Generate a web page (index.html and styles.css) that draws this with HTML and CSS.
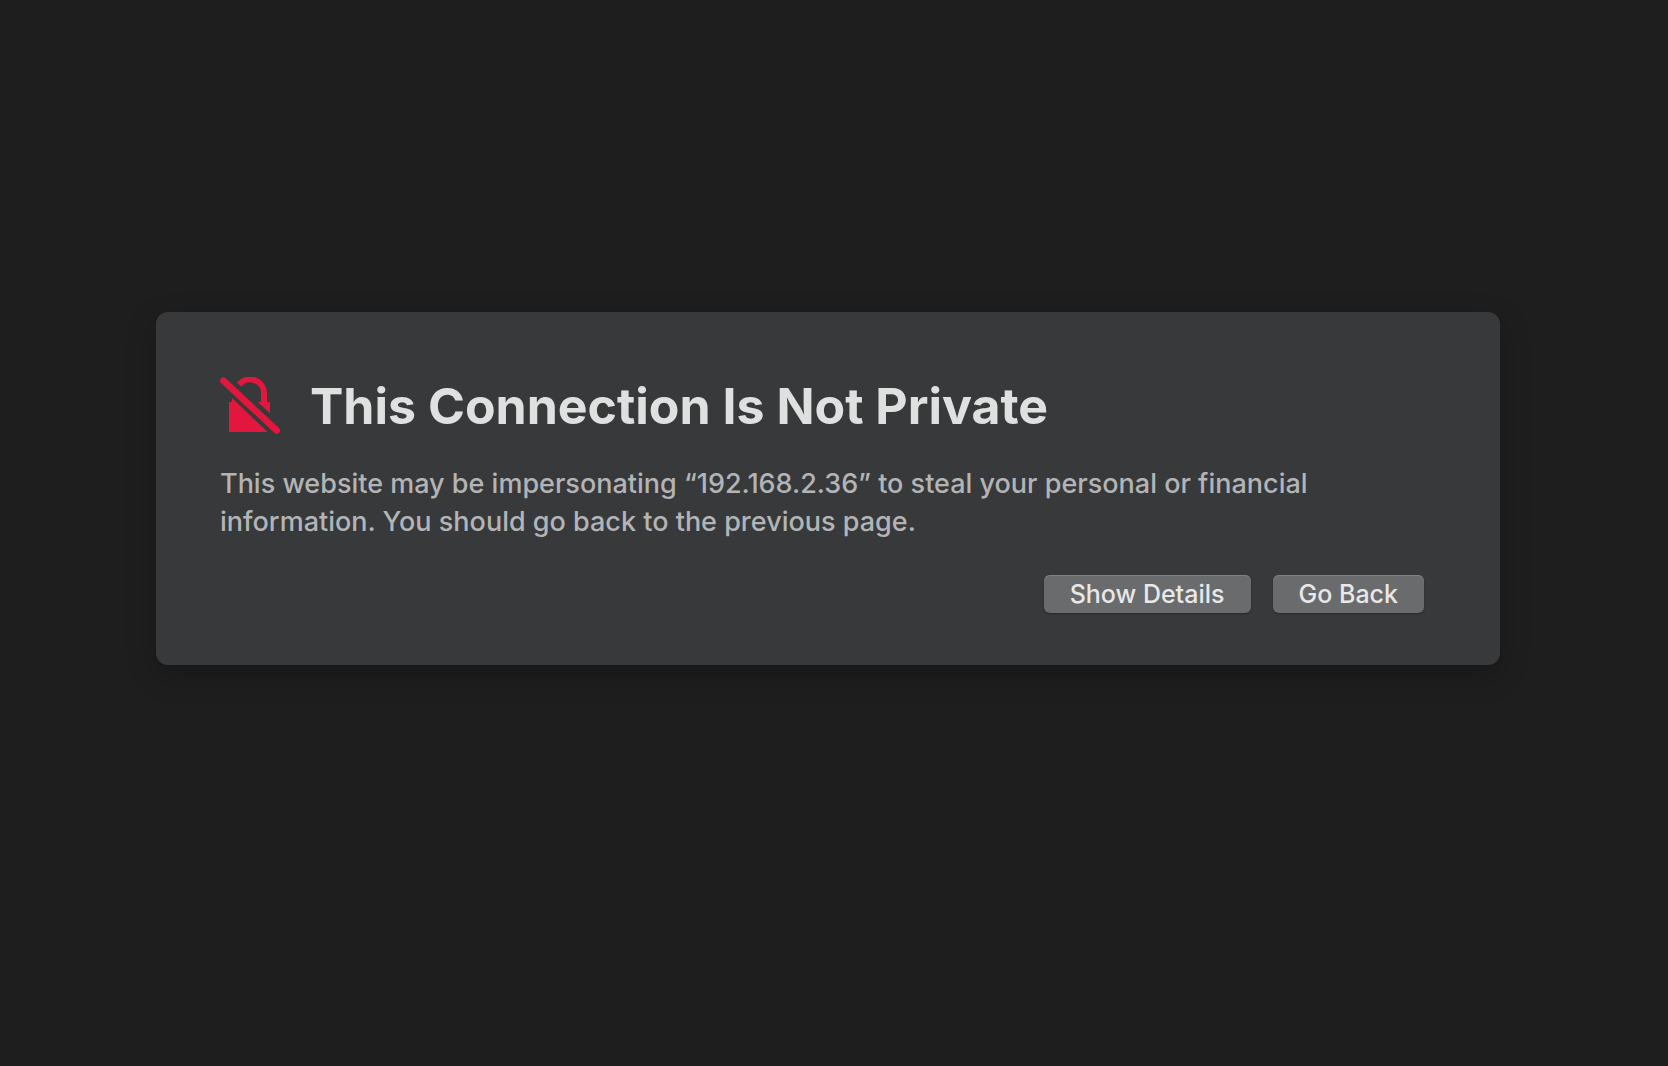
FILE: index.html
```html
<!DOCTYPE html>
<html lang="en">
<head>
  <meta charset="UTF-8">
  <meta name="viewport" content="width=device-width, initial-scale=1.0">
  <title>This Connection Is Not Private</title>
  <link rel="stylesheet" href="styles.css">
</head>
<body>
  <main class="warning">
    <div class="title">
      <svg class="lock-icon" viewBox="30 38 180 174" aria-hidden="true">
        <path class="lock-shackle" d="M87 61 A42 42 0 0 1 162 87 V114" />
        <path class="lock-body" d="M57 113 H66 V101 L173 203 H57 Z" />
        <path class="lock-body" d="M143 113 H180 V147 Z" />
        <path class="lock-slash" d="M40 49 L200 198" />
      </svg>
      <h1>This Connection Is Not Private</h1>
    </div>
    <p class="message">This website may be impersonating “192.168.2.36” to steal your personal or financial information. You should go back to the previous page.</p>
    <div class="buttons">
      <button type="button">Show Details</button>
      <button type="button">Go Back</button>
    </div>
  </main>
</body>
</html>
```

FILE: styles.css
```css
* {
  box-sizing: border-box;
}

body {
  margin: 0;
  padding: 312px 168px 40px 156px;
  min-height: 100vh;
  background-color: #1e1e1e;
  color: #b3b4b6;
  font-family: Inter, "Liberation Sans", sans-serif;
}

.warning {
  padding: 64px 76px 52px 64px;
  background-color: #38393b;
  border-radius: 12px;
  box-shadow: 0 10px 30px rgba(0, 0, 0, 0.22);
}

.title {
  display: flex;
  align-items: center;
  gap: 30px;
}

.lock-icon {
  width: 60px;
  height: 58px;
  flex: none;
}

.lock-body {
  fill: #e3173e;
}

.lock-shackle,
.lock-slash {
  fill: none;
  stroke: #e3173e;
  stroke-width: 18;
}

.lock-slash {
  stroke-width: 20;
  stroke-linecap: round;
}

h1 {
  margin: 0;
  font-size: 50px;
  line-height: 60px;
  font-weight: 700;
  color: #dfe1e1;
}

.message {
  margin: 29px 0 34px;
  font-size: 27px;
  line-height: 38px;
  font-weight: 500;
}

.buttons {
  display: flex;
  justify-content: flex-end;
  gap: 22px;
}

button {
  height: 38px;
  padding: 0 26px;
  border: none;
  border-radius: 6px;
  background-color: #6a6b6d;
  box-shadow: inset 0 1px 0 #818284, 0 1px 2px rgba(0, 0, 0, 0.3);
  color: #e8e8e9;
  font-family: inherit;
  font-size: 25px;
  line-height: 38px;
  font-weight: 500;
}

button:active {
  background-color: #87888a;
}
```
